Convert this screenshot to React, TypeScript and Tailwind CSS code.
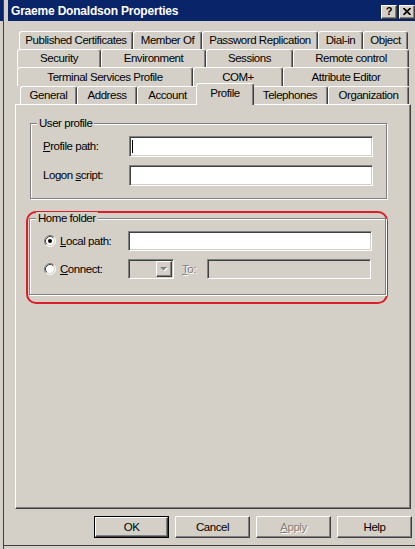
import React from 'react';

const raised =
  'border border-t-white border-l-white border-r-[#404040] border-b-[#404040] shadow-[inset_-1px_-1px_0_#808080]';
const sunken =
  'border border-t-[#808080] border-l-[#808080] border-r-white border-b-white shadow-[inset_1px_1px_0_#404040,inset_-1px_-1px_0_#d4d0c8]';
const etched = 'border border-[#808080] shadow-[1px_1px_0_#fff,inset_1px_1px_0_#fff]';
const tabCls =
  'h-full shrink-0 flex items-center justify-center whitespace-nowrap border-t border-l border-r border-t-white border-l-white border-r-[#404040] rounded-tl-[3px] rounded-tr-[3px] shadow-[inset_-1px_0_0_#808080]';

type T = { label: string; w: string };

const row1: T[] = [
  { label: 'Published Certificates', w: 'w-[114px]' },
  { label: 'Member Of', w: 'w-[69px]' },
  { label: 'Password Replication', w: 'w-[116px]' },
  { label: 'Dial-in', w: 'w-[45px]' },
  { label: 'Object', w: 'w-[45px]' },
];
const row2: T[] = [
  { label: 'Security', w: 'w-[84px]' },
  { label: 'Environment', w: 'w-[105px]' },
  { label: 'Sessions', w: 'w-[87px]' },
  { label: 'Remote control', w: 'w-[116px]' },
];
const row3: T[] = [
  { label: 'Terminal Services Profile', w: 'w-[176px]' },
  { label: 'COM+', w: 'w-[90px]' },
  { label: 'Attribute Editor', w: 'w-[126px]' },
];

function U({ children }: { children: React.ReactNode }) {
  return <span className="underline decoration-1 underline-offset-[1px]">{children}</span>;
}

function Radio({ checked }: { checked?: boolean }) {
  return (
    <svg width="12" height="12" viewBox="0 0 12 12" className="shrink-0">
      <circle cx="6" cy="6" r="5" fill="#fff" />
      <path d="M2.11 9.89 A5.5 5.5 0 0 1 9.89 2.11" fill="none" stroke="#808080" />
      <path d="M9.89 2.11 A5.5 5.5 0 0 1 2.11 9.89" fill="none" stroke="#fff" />
      <path d="M2.82 9.18 A4.5 4.5 0 0 1 9.18 2.82" fill="none" stroke="#404040" />
      <path d="M9.18 2.82 A4.5 4.5 0 0 1 2.82 9.18" fill="none" stroke="#d4d0c8" />
      {checked && <circle cx="6" cy="6" r="2" fill="#000" />}
    </svg>
  );
}

function Btn({ children, def, disabled }: { children: React.ReactNode; def?: boolean; disabled?: boolean }) {
  const inner = (
    <div
      className={`w-full h-full ${raised} flex items-center justify-center ${
        disabled ? 'text-[#808080] [text-shadow:1px_1px_0_#fff]' : ''
      }`}
    >
      {children}
    </div>
  );
  return def ? (
    <div className="w-[75px] h-[22px] border border-black">{inner}</div>
  ) : (
    <div className="w-[75px] h-[22px]">{inner}</div>
  );
}

export default function App() {
  return (
    <div className="w-[415px] h-[549px] overflow-hidden flex bg-[#d4d0c8] text-black text-[11.5px] leading-[13px] tracking-[-0.45px] font-['Liberation_Sans',Arial,sans-serif]">
      <div className="w-[3px] shrink-0 flex flex-col">
        <div className="h-[21px] bg-[#0a246a]" />
        <div className="flex-1 bg-[#d4d0c8]" />
      </div>
      <div className="w-[1px] shrink-0 bg-[#404040]" />
      <div className="flex-1 min-w-0 flex flex-col pl-[4px]">
        {/* Title bar */}
        <div className="h-[21px] shrink-0 bg-[#0a246a] flex items-center pt-[2px] pl-[3px] text-white font-bold text-[12px] tracking-[-0.2px]">
          <span className="whitespace-nowrap">Graeme Donaldson Properties</span>
          <div className="ml-auto flex gap-[2px] text-black">
            <div className={`w-[16px] h-[14px] bg-[#d4d0c8] ${raised} flex items-center justify-center text-[11px] leading-none tracking-normal`}>
              ?
            </div>
            <div className={`w-[16px] h-[14px] bg-[#d4d0c8] ${raised} flex items-center justify-center`}>
              <svg width="8" height="7" viewBox="0 0 8 7">
                <path d="M0.5 0 L7.5 7 M7.5 0 L0.5 7" stroke="#000" strokeWidth="1.6" />
              </svg>
            </div>
          </div>
        </div>

        {/* Tabs */}
        <div className="mt-[10px] flex flex-col">
          <div className="flex h-[18px] ml-[11px]">
            {row1.map((t) => (
              <div key={t.label} className={`${tabCls} ${t.w}`}>
                {t.label}
              </div>
            ))}
          </div>
          <div className="flex h-[18px] ml-[9px]">
            {row2.map((t) => (
              <div key={t.label} className={`${tabCls} ${t.w}`}>
                {t.label}
              </div>
            ))}
          </div>
          <div className="flex h-[19px] ml-[9px]">
            {row3.map((t) => (
              <div key={t.label} className={`${tabCls} ${t.w}`}>
                {t.label}
              </div>
            ))}
          </div>
          <div className="flex items-end h-[18px] ml-[12px]">
            <div className={`${tabCls} w-[57px]`}>General</div>
            <div className={`${tabCls} w-[60px]`}>Address</div>
            <div className={`${tabCls} w-[61px]`}>Account</div>
            <div className="relative z-10 -mx-[2px] -mb-[1px] w-[58px] h-[22px] shrink-0 flex items-start justify-center pt-[3px] bg-[#d4d0c8] border-t border-l border-r border-t-white border-l-white border-r-[#404040] rounded-tl-[3px] rounded-tr-[3px] shadow-[inset_-1px_0_0_#808080]">
              Profile
            </div>
            <div className={`${tabCls} w-[76px]`}>Telephones</div>
            <div className={`${tabCls} w-[81px]`}>Organization</div>
          </div>
        </div>

        {/* Panel */}
        <div className={`ml-[7px] w-[396px] h-[405px] shrink-0 ${raised} flex flex-col`}>
          {/* User profile */}
          <div className={`relative ml-[14px] mt-[18px] w-[357px] h-[76px] ${etched} flex flex-col gap-[8px] pt-[12px]`}>
            <span className="absolute left-[6px] top-[-7px] px-[2px] bg-[#d4d0c8] whitespace-nowrap">User profile</span>
            <div className="flex items-center h-[21px]">
              <div className="w-[98px] pl-[12px] whitespace-nowrap">
                <U>P</U>rofile path:
              </div>
              <div className={`w-[244px] h-[21px] bg-white ${sunken} flex items-center pl-[2px]`}>
                <div className="w-[1px] h-[13px] bg-black" />
              </div>
            </div>
            <div className="flex items-center h-[21px]">
              <div className="w-[98px] pl-[12px] whitespace-nowrap">
                Logon <U>s</U>cript:
              </div>
              <div className={`w-[244px] h-[21px] bg-white ${sunken}`} />
            </div>
          </div>

          {/* Home folder (highlighted) */}
          <div className="ml-[10px] mt-[12px] w-[362px] h-[93px] border-2 border-[#dc1e2a] rounded-[10px]">
            <div className={`relative ml-[1px] mt-[5px] w-[357px] h-[77px] ${etched} flex flex-col gap-[8px] pt-[12px]`}>
              <span className="absolute left-[6px] top-[-7px] px-[2px] bg-[#d4d0c8] whitespace-nowrap">Home folder</span>
              <div className="flex items-center h-[20px]">
                <div className="w-[98px] pl-[14px] flex items-center gap-[4px] whitespace-nowrap">
                  <Radio checked />
                  <span>
                    <U>L</U>ocal path:
                  </span>
                </div>
                <div className={`w-[244px] h-[20px] bg-white ${sunken}`} />
              </div>
              <div className="flex items-center h-[20px]">
                <div className="w-[98px] pl-[14px] flex items-center gap-[4px] whitespace-nowrap">
                  <Radio />
                  <span>
                    <U>C</U>onnect:
                  </span>
                </div>
                <div className={`w-[46px] h-[20px] bg-[#d4d0c8] ${sunken} flex justify-end p-[1px]`}>
                  <div className={`w-[16px] h-full ${raised} flex items-center justify-center`}>
                    <svg width="8" height="5" viewBox="0 0 8 5">
                      <polygon points="1,1 8,1 4.5,4.5" fill="#fff" />
                      <polygon points="0,0 7,0 3.5,3.5" fill="#808080" />
                    </svg>
                  </div>
                </div>
                <div className="ml-[8px] w-[25px] text-[#808080] [text-shadow:1px_1px_0_#fff]">
                  <U>T</U>o:
                </div>
                <div className={`w-[164px] h-[20px] bg-[#d4d0c8] ${sunken}`} />
              </div>
            </div>
          </div>
        </div>

        {/* Buttons */}
        <div className="mt-[7px] flex justify-end gap-[6px] pr-[3px] shrink-0">
          <Btn def>OK</Btn>
          <Btn>Cancel</Btn>
          <Btn disabled>
            <span>
              <U>A</U>pply
            </span>
          </Btn>
          <Btn>Help</Btn>
        </div>
        <div className="flex-1" />
        <div className="h-[1px] -ml-[4px] bg-[#404040] shrink-0" />
        <div className="h-[3px] shrink-0" />
      </div>
    </div>
  );
}
